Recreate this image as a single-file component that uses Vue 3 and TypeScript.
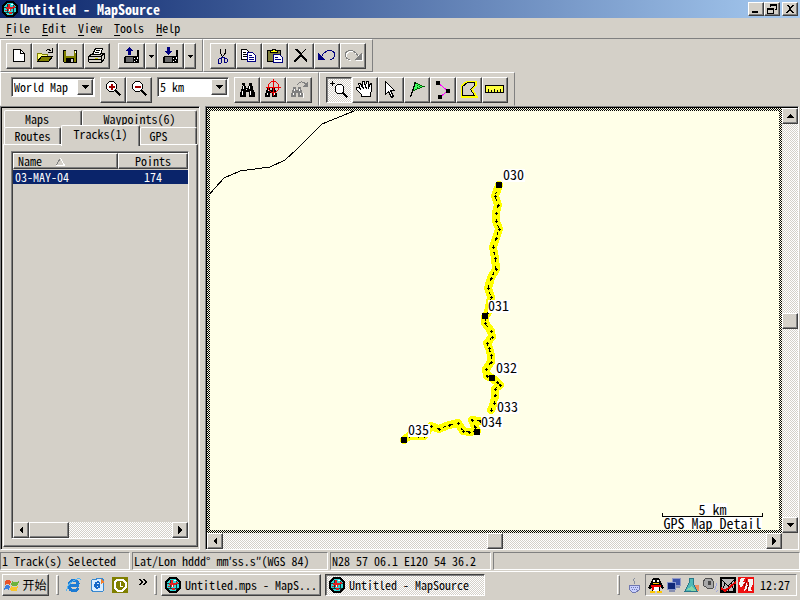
<script setup lang="ts">
import { h, ref, type FunctionalComponent } from 'vue'

// One painted layer of an icon: path, fill, stroke, stroke width
type Layer = [d: string, fill?: string, stroke?: string, width?: number]

const K = '#000'
const N = '#000080'
const G = '#808080'

const binoculars = 'M6 4h3v3h1v2h2v-2h1v-3h3v3h1v4h1v2h1v5h-6v-5h-3v5h-6v-5h1v-3h1v-3h1z'
const smallBinoculars = 'M5 8h3v3h2v-3h3v3h1v3h1v4h-5v-4h-2v4h-5v-4h1v-3h1z'

const icons: Record<string, Layer[]> = {
  fresh: [['M5.5 4.5h7l4 4v8h-11z', '#fff', K], ['M12.5 4.5v4h4', 'none', K]],
  open: [
    ['M3.5 16.5v-8h4l1 1h5v3', '#ffff80', '#808000'],
    ['M3.5 16.5l4-5h11l-4 5z', '#808000', K],
    ['M11.5 6.5c2-3 4-2 6 0M18 3v4h-4', 'none', K],
  ],
  save: [
    ['M3.5 5.5h13v12h-12l-1-1z', '#808000', K],
    ['M6 5h8v6h-8z', '#d4d0c8'],
    ['M6 13h8v5h-8z', K],
    ['M11 14h2v3h-2z', '#d4d0c8'],
    ['M15 6h1v2h-1z', '#fff'],
  ],
  print: [
    ['M2.5 11.5l4-3h12v5l-3 4h-12l-1-1z', '#d4d0c8', K],
    ['M6.500 9.500l3-6h7l-2 6z', '#fff', K],
    ['M10 5.500h4M9 7.500h4', 'none', K],
    ['M3 11.5h12l3-3M15.5 11.5v5M3 14.500h12', 'none', K],
    ['M9 13h3v1h-3z', '#c0c000'],
  ],
  upload: [
    ['M4 11h12v7h-13v-6z', K],
    ['M5 12h7v5h-7z', '#686868'],
    ['M16 5h2v13h-2z', K],
    ['M13 13h1v1h-1zM15 15h1v1h-1zM13 16h1v1h-1zM16 12h1v2h-1z', '#fff'],
    ['M8 2h1v1h1v1h1v1h1v1h-2v4h-3v-4h-2v-1h1v-1h1v-1h1z', N],
  ],
  download: [
    ['M4 11h12v7h-13v-6z', K],
    ['M5 12h7v5h-7z', '#686868'],
    ['M16 5h2v13h-2z', K],
    ['M13 13h1v1h-1zM15 15h1v1h-1zM13 16h1v1h-1zM16 12h1v2h-1z', '#fff'],
    ['M7 2h3v4h2v1h-1v1h-1v1h-1v1h-1v-1h-1v-1h-1v-1h-1v-1h2z', N],
  ],
  cut: [
    ['M8.5 4v4l2 4M13.5 4v4l-3 4', 'none', K],
    ['M10.5 12l-2 2M10.5 12l2 1', 'none', N],
    ['M6.5 14.5l1-1h2v4l-1 1h-2zM12.5 13.5h2l1 1v2l-1 1h-2z', 'none', N],
  ],
  copy: [
    ['M3.5 4.5h5l3 3v7h-8z', '#fff', K],
    ['M5 7.5h3M5 9.5h4M5 11.5h4', 'none', K],
    ['M9.5 7.5h5l3 3v6h-8z', '#fff', N],
    ['M11 10.5h3M11 12.5h5M11 14.5h5', 'none', N],
  ],
  paste: [
    ['M3.5 5.5h13v11h-13z', '#808040', K],
    ['M6.5 7.5v-2h2v-1h3v1h2v2z', '#ffff00', K],
    ['M9.5 9.5h6l3 3v5h-9z', '#fff', N],
    ['M11 12.5h3M11 14.5h6', 'none', N],
  ],
  remove: [['M4 4h3l4 4l4-4h1l-4 5l5 6v2h-1l-5-6l-5 6h-2v-1l6-7z', K]],
  undo: [
    ['M2 8l8 7h-8z', N],
    ['M6 11c2-5 7-6 10-5c4 2 4 7-2 9', 'none', N, 1],
  ],
  redo: [
    ['M21 9v7h-8z', '#fff'],
    ['M17 12c-2-5-7-6-10-5c-4 2-4 7 2 9', 'none', '#fff', 1],
    ['M20 8v7h-8z', G],
    ['M16 11c-2-5-7-6-10-5c-4 2-4 7 2 9', 'none', G, 1],
  ],
  zoomIn: [
    ['M7.5 2.5h4l3 3v4l-3 3h-4l-3-3v-4z', '#fff', K],
    ['M13.5 11.5l5 5', 'none', K, 2],
    ['M9 5h2v6h-2zM7 7h6v2h-6z', '#a00000'],
  ],
  zoomOut: [
    ['M7.5 2.5h4l3 3v4l-3 3h-4l-3-3v-4z', '#fff', K],
    ['M13.5 11.5l5 5', 'none', K, 2],
    ['M7 7h6v2h-6z', '#a00000'],
  ],
  find: [[binoculars, K], ['M7 7h1v3h-1zM6 12h1v4h-1zM13 7h1v3h-1zM14 12h1v4h-1zM10 10h1v1h-1z', '#fff']],
  findNear: [
    [smallBinoculars, K],
    ['M6 10h1v2h-1zM5 14h1v2h-1zM11 10h1v2h-1zM12 14h1v2h-1z', '#fff'],
    ['M9.5 2.500h4l3 3v5l-3 3h-4l-3-3v-5zM11.5 0v17M4 8.5h15', 'none', '#f00000'],
  ],
  findNext: [
    [smallBinoculars, G],
    ['M6 10h1v2h-1zM5 14h1v2h-1zM11 10h1v2h-1zM12 14h1v2h-1zM15 14h1v5h-1z', '#fff'],
    ['M9.5 6c2-4 6-4 8-1', 'none', G],
    ['M20 2v6h-6z', G],
  ],
  lens: [
    ['M9.5 5.5h4l2 2v5l-2 2h-4l-2-2v-5z', '#fff', K],
    ['M14.5 13.5l5 5', 'none', K, 2],
    ['M4.5 2v5M2 4.5h5', 'none', K],
  ],
  hand: [
    ['M7.5 17.5v-2l-5-5v-2h2l2 2l-2-6h2l2 4v-6h2l1 6l1-6h2v6l2-4h1v7l-1 3v3z', '#fff', K],
    ['M9.5 8v2M12.5 8v2M14.5 8v2', 'none', K],
  ],
  arrow: [['M5.5 2.5l9 9h-4l3 6l-2 1l-3-6l-3 3z', '#fff', K]],
  flag: [['M8.5 3.5l9 4l-10 4z', '#40ff60', '#006000'], ['M9.5 3l-5 15', 'none', K, 1], ['M11 6h1v1h-1zM13 7h1v1h-1zM11 8h1v1h-1z', '#006000']],
  route: [['M6 4l10 8l-8 6', 'none', '#ff00ff'], ['M4 2h4v4h-4zM14 10h4v4h-4zM6 16h4v4h-4z', K]],
  polygon: [['M4.5 7.5l5-4h7v3l-4 4l4 6h-12z', 'none', '#ffff00', 4], ['M4.5 7.5l5-4h7v3l-4 4l4 6h-12z', '#d4d0c8', K]],
  ruler: [
    ['M1.5 6.5h18v7h-18z', '#ffff40', K],
    ['M4.5 10v3M7.5 11v2M10.5 10v3M13.5 11v2M16.5 10v3', 'none', K],
  ],
  globe: [
    ['M5 1h6l4 4v6l-4 4h-6l-4-4v-6z', '#30d8d8', K, 2],
    ['M5 3v9M11 4v9M2 6.500h12M3 11.500h10', 'none', '#104040'],
    ['M6 3h2v3h3v2h-2v2h-3v-2h-2v-2h2zM11 5h2v2h-2zM7 11h3v2h-3zM3 9h2v1h-2z', '#e02020'],
    ['M9 3h2v1h-2zM7 8h1v2h-1z', '#fff'],
  ],
  windows: [
    ['M1 4q3-2 6 0l-1 4q-3-2-5 0z', '#e8532a'],
    ['M8 4q4 2 7 0l-1 4q-3 2-7 0z', '#6cb33e'],
    ['M1 9q3-2 5 0l-1 4q-3-2-5 0z', '#3c7fe0'],
    ['M7 9q4 2 7 0l-1 5q-4 1-7-1z', '#f7c52c'],
  ],
  ie: [
    ['M12.500 7q-1-3.500-4.500-3.500q-4.500 0-5 5q0 5 5 5q3 0 4.500-2.500M4 8.500h9', 'none', '#1c7bd4', 3],
    ['M1 14q-1-5 6-10q6-4 8-1', 'none', '#56b4f0', 1],
  ],
  mail: [
    ['M3 3l9-2l3 2l-1 11l-9 1l-3-2z', '#d8ecff', '#3888d0'],
    ['M11 6q-4-2-5 2q0 4 5 2M6 8h5', 'none', '#1668c8', 2],
    ['M12 2l4 3l-4 2z', '#f08030'],
  ],
  clock: [
    ['M0 0h16v16h-16z', '#808000'],
    ['M5.500 2.500h5l3 3v5l-3 3h-5l-3-3v-5z', 'none', '#fff', 2],
    ['M8 5v4h3', 'none', '#fff', 1],
  ],
  cup: [
    ['M2 8h11l-1 5l-3 2h-4l-3-3z', '#c8d0ff', '#7078b0'],
    ['M4 10h1v1h-1zM6 10h1v1h-1zM8 10h1v1h-1zM10 10h1v1h-1zM5 12h1v1h-1zM7 12h1v1h-1zM9 12h1v1h-1z', '#7078b0'],
    ['M7 7q2-2 0-3t1-3', 'none', '#8890a0'],
  ],
  penguin: [
    ['M5 1h6l2 4l3 6l-2 1l-2-2v4h-8v-4l-2 2l-2-1l3-6z', '#000'],
    ['M5 9h6v5h-6z', '#fff'],
    ['M3 8h10v2h-10zM4 10h2v3h-2z', '#f00000'],
    ['M5 6h6v1h-6zM2 14h5v2h-5zM9 14h5v2h-5z', '#ffc800'],
    ['M5 3h2v2h-2zM9 3h2v2h-2z', '#fff'],
  ],
  network: [
    ['M6.500 1.500h8v7h-8z', '#3850a8', '#9098c8'],
    ['M1.500 5.500h8v7h-8z', '#102878', '#8898d0'],
    ['M3 14h6M10 10h4', 'none', '#8890b0', 2],
  ],
  person: [
    ['M10 8h5v6h-4z', '#f09060'],
    ['M5 1h4v5l4 8h-12l4-8z', '#50b8b8', '#287888'],
    ['M2 13l6-4l4 5z', '#88d8a8'],
  ],
  speaker: [
    ['M3 2l6-1l3 4l-1 6l-4 1l-5-3l-1-4z', '#a8a8a8', '#505050'],
    ['M6 4h3v4h-3z', '#484848'],
    ['M12 13q3-2 2-7M14 15q4-3 2-7', 'none', '#a0a8e0'],
  ],
  shield: [
    ['M1 1h14v14h-14z', '#b8b8b8', K, 2],
    ['M2 3l6 6l6-6M8 9v6M5 6l-3 8M11 6l3 8', 'none', K],
    ['M1 11l4 3l11-9', 'none', '#e00000', 2],
  ],
  swap: [
    ['M0 0h16v16h-16z', '#f01010'],
    ['M3 1h4l-2 4h2l-4 6l-2-4zM10 2h5v5l-2 4l1 3h-4zM9 5l-3 9l4-3z', '#f4f4f4'],
    ['M9 2l-3 8M11 5l-2 9', 'none', '#900000'],
  ],
}

const Icon: FunctionalComponent<{ name: string; box?: number }> = (props) => {
  const box = props.box ?? 22
  return h(
    'svg',
    { width: box, height: box, viewBox: `0 0 ${box} ${box}`, 'shape-rendering': 'crispEdges', 'aria-hidden': 'true' },
    icons[props.name].map(([d, fill = 'none', stroke = 'none', width = 1]) =>
      h('path', { d, fill, stroke, 'stroke-width': width }),
    ),
  )
}
Icon.props = ['name', 'box']

const menus = ['File', 'Edit', 'View', 'Tools', 'Help']
const fileTools = [['fresh', 'New'], ['open', 'Open'], ['save', 'Save'], ['print', 'Print']]
const transferTools = [['upload', 'Send to device'], ['download', 'Receive from device']]
const editTools = [['cut', 'Cut'], ['copy', 'Copy'], ['paste', 'Paste'], ['remove', 'Delete'], ['undo', 'Undo'], ['redo', 'Redo']]
const zoomTools = [['zoomIn', 'Zoom in'], ['zoomOut', 'Zoom out']]
const findTools = [['find', 'Find'], ['findNear', 'Find nearest'], ['findNext', 'Find next']]
const mapTools = [
  ['lens', 'Zoom tool'], ['hand', 'Hand tool'], ['arrow', 'Selection tool'], ['flag', 'Waypoint tool'],
  ['route', 'Route tool'], ['polygon', 'Map tool'], ['ruler', 'Distance tool'],
]

const activeTool = ref('lens')
const product = ref('World Map')
const scale = ref('5 km')

const tabRows = [['Maps', 'Waypoints(6)'], ['Routes', 'Tracks(1)', 'GPS']]
const activeTab = ref('Tracks(1)')

const trackSouth = [
  [289, 74], [285, 85], [288, 94], [286, 102], [286, 110], [289, 118], [286, 127], [283, 136], [285, 147], [286, 158],
  [281, 167], [278, 177], [281, 186], [278, 201], [275, 206], [275, 212], [281, 220], [282, 226], [277, 232], [279, 237],
  [281, 244], [281, 251], [276, 258], [277, 265], [282, 267], [287, 271], [290, 274], [285, 278], [285, 284], [284, 292],
  [281, 299],
]
const trackWest = [
  [270, 310], [262, 309], [265, 316], [267, 320], [259, 321], [253, 320], [248, 312], [239, 314], [229, 318],
  [221, 315], [214, 325], [208, 325], [199, 325], [194, 329],
]
const tracks = [trackSouth, trackWest]
const points = (t: number[][]) => t.map((p) => p.join(',')).join(' ')
const crosses = tracks.flat().map(([x, y]) => `M${x - 1} ${y}h3v1h-3zM${x} ${y - 1}h1v3h-1z`).join('')

const waypoints = [
  { name: '030', x: 293, y: 69 },
  { name: '031', x: 278, y: 200 },
  { name: '032', x: 286, y: 262 },
  { name: '033', x: 287, y: 301 },
  { name: '034', x: 271, y: 316 },
  { name: '035', x: 198, y: 324 },
]
const markers = [[289, 74], [275, 205], [282, 267], [267, 321], [194, 329]]

const trayIcons = ['penguin', 'network', 'person', 'speaker', 'shield', 'swap']
</script>

<template>
  <div class="app">
    <header class="title">
      <Icon name="globe" :box="16" />
      <h1>Untitled - MapSource</h1>
      <div class="window-buttons">
        <button type="button" class="face" aria-label="Minimize"><svg width="12" height="10"><path d="M2 7h6v2H2z" /></svg></button>
        <button type="button" class="face" aria-label="Restore"><svg width="12" height="10"><path d="M4 0h7v6H9V5h1V2H5v1H4zM1 4h7v6H1zM2 6v3h5V6z" fill-rule="evenodd" /></svg></button>
        <button type="button" class="face close" aria-label="Close"><svg width="12" height="10"><path d="M2 1h2l2 2 2-2h2L7 4v1l3 4H8L6 6 4 9H2l3-4V4z" /></svg></button>
      </div>
    </header>

    <nav class="menu">
      <button v-for="m in menus" :key="m" type="button"><u>{{ m[0] }}</u>{{ m.slice(1) }}</button>
    </nav>

    <div class="bars">
      <div class="row">
        <div class="band opening">
          <div class="cluster">
            <button v-for="[name, label] in fileTools" :key="name" type="button" class="tool face" :aria-label="label"><Icon :name="name" /></button>
          </div>
          <div class="cluster">
            <template v-for="[name, label] in transferTools" :key="name">
              <button type="button" class="tool face wide" :aria-label="label"><Icon :name="name" /></button>
              <button type="button" class="face more" :aria-label="label + ' options'"><svg width="5" height="3"><path d="M0 0h5L2.500 3z" /></svg></button>
            </template>
          </div>
        </div>
        <div class="band">
          <div class="cluster">
            <button v-for="[name, label] in editTools" :key="name" type="button" class="tool face" :aria-label="label"><Icon :name="name" /></button>
          </div>
        </div>
      </div>
      <div class="row second">
        <div class="band finder">
          <div class="combo product">
            <select v-model="product" aria-label="Map product"><option>World Map</option></select>
            <span class="face drop"><svg width="8" height="4"><path d="M0 0h8L4 4z" /></svg></span>
          </div>
          <div class="cluster">
            <button v-for="[name, label] in zoomTools" :key="name" type="button" class="tool face" :aria-label="label"><Icon :name="name" /></button>
          </div>
          <div class="combo scale">
            <select v-model="scale" aria-label="Map scale"><option>5 km</option></select>
            <span class="face drop"><svg width="8" height="4"><path d="M0 0h8L4 4z" /></svg></span>
          </div>
          <div class="cluster">
            <button v-for="[name, label] in findTools" :key="name" type="button" class="tool face" :aria-label="label"><Icon :name="name" /></button>
          </div>
        </div>
        <div class="band">
          <div class="cluster">
            <button
              v-for="[name, label] in mapTools" :key="name" type="button" class="tool face"
              :class="{ pressed: activeTool === name }" :aria-label="label" @click="activeTool = name"
            ><Icon :name="name" /></button>
          </div>
        </div>
      </div>
    </div>

    <main class="content">
      <section class="side">
        <div v-for="(row, i) in tabRows" :key="i" class="tabs" :class="'tabs-' + i" role="tablist">
          <button
            v-for="t in row" :key="t" type="button" role="tab" class="tab" :class="{ active: t === activeTab }"
            :aria-selected="t === activeTab" @click="activeTab = t"
          >{{ t }}</button>
        </div>
        <div class="page">
          <div class="list">
            <table>
              <thead>
                <tr>
                  <th class="name">Name <svg width="9" height="8"><path d="M4.500 0L0 7.500" stroke="#808080" /><path d="M4.500 0l4 7.500H0" fill="none" stroke="#fff" /></svg></th>
                  <th class="count">Points</th>
                </tr>
              </thead>
              <tbody>
                <tr><td>03-MAY-04</td><td class="count">174</td></tr>
              </tbody>
            </table>
            <div class="scroll horizontal start">
              <button type="button" class="face end" aria-label="Scroll list left"><svg width="4" height="8"><path d="M4 0v8L0 4z" /></svg></button>
              <div class="track"><div class="face thumb long"></div></div>
              <button type="button" class="face end" aria-label="Scroll list right"><svg width="4" height="8"><path d="M0 0v8L4 4z" /></svg></button>
            </div>
          </div>
        </div>
      </section>

      <section class="pane">
        <div class="frame">
          <div class="map">
            <svg class="chart" role="img" aria-label="Track map">
              <polyline class="coast" points="-3,86 14,67 30,60 60,56 75,49 87,38 112,13 144,0" />
              <polyline v-for="(t, i) in tracks" :key="i" class="glow" :points="points(t)" />
              <polyline v-for="(t, i) in tracks" :key="'l' + i" class="line" :points="points(t)" />
              <path :d="crosses" />
              <g v-for="w in waypoints" :key="w.name">
                <rect class="plate" :x="w.x" :y="w.y - 11" width="22" height="13" />
                <text :x="w.x" :y="w.y">{{ w.name }}</text>
              </g>
              <rect v-for="([x, y], i) in markers" :key="'m' + i" :x="x - 3" :y="y - 3" width="6" height="6" />
            </svg>
            <div class="legend">
              <span class="distance">5 km</span>
              <span class="bracket"></span>
              <span class="detail">GPS Map Detail</span>
            </div>
          </div>
        </div>
        <div class="scroll vertical">
          <button type="button" class="face end" aria-label="Pan up"><svg width="8" height="4"><path d="M4 0l4 4H0z" /></svg></button>
          <div class="track"><div class="face thumb"></div></div>
          <button type="button" class="face end" aria-label="Pan down"><svg width="8" height="4"><path d="M0 0h8L4 4z" /></svg></button>
        </div>
        <div class="scroll horizontal">
          <button type="button" class="face end" aria-label="Pan left"><svg width="4" height="8"><path d="M4 0v8L0 4z" /></svg></button>
          <div class="track"><div class="face thumb"></div></div>
          <button type="button" class="face end" aria-label="Pan right"><svg width="4" height="8"><path d="M0 0v8L4 4z" /></svg></button>
        </div>
      </section>
    </main>

    <div class="status">
      <span>1 Track(s) Selected</span>
      <span>Lat/Lon hddd° mm′ss.s″(WGS 84)</span>
      <span>N28 57 06.1 E120 54 36.2</span>
      <span></span>
    </div>

    <footer class="taskbar">
      <button type="button" class="face begin"><Icon name="windows" :box="16" />开始</button>
      <i class="grip"></i>
      <div class="quick">
        <button type="button" aria-label="Internet Explorer"><Icon name="ie" :box="16" /></button>
        <button type="button" aria-label="Outlook Express"><Icon name="mail" :box="16" /></button>
        <button type="button" aria-label="Clock"><Icon name="clock" :box="16" /></button>
        <button type="button" class="chevrons" aria-label="More"><svg width="8" height="6"><path d="M0 0h2l2 3-2 3H0l2-3zM4 0h2l2 3-2 3H4l2-3z" /></svg></button>
      </div>
      <i class="grip tight"></i>
      <div class="tasks">
        <button type="button" class="face task"><Icon name="globe" :box="16" />Untitled.mps - MapS...</button>
        <button type="button" class="face task pressed"><Icon name="globe" :box="16" />Untitled - MapSource</button>
      </div>
      <i class="grip"></i>
      <Icon name="cup" :box="16" class="input-icon" />
      <div class="tray">
        <Icon v-for="t in trayIcons" :key="t" :name="t" :box="16" />
        <time>12:27</time>
      </div>
    </footer>
  </div>
</template>

<style>
body {
  background: #d4d0c8;
}
</style>

<style scoped>
.app {
  --face: #d4d0c8;
  --shade: #808080;
  --deep: #404040;
  --dither: repeating-conic-gradient(#fff 0 25%, #d4d0c8 0 50%) 0 0 / 2px 2px;
  display: flex;
  flex-direction: column;
  height: 100vh;
  min-height: 400px;
  background: var(--face);
  color: #000;
  font: 12px/16px "Noto Sans Mono CJK SC", "Liberation Mono", "Noto Sans CJK SC", monospace;
  overflow: hidden;
}
.app *, .app *::before {
  box-sizing: border-box;
}
button {
  margin: 0;
  padding: 0;
  border: 0;
  background: none;
  color: inherit;
  font: inherit;
  white-space: nowrap;
}
svg {
  display: block;
  flex: none;
  shape-rendering: crispEdges;
}
.face {
  display: flex;
  align-items: center;
  justify-content: center;
  background: var(--face);
  border: 1px solid;
  border-color: #fff var(--deep) var(--deep) #fff;
  box-shadow: inset -1px -1px var(--shade);
}
.face.pressed {
  background: var(--dither);
  border-color: var(--deep) #fff #fff var(--deep);
  box-shadow: inset 1px 1px var(--shade);
}

.title {
  display: flex;
  flex: none;
  align-items: center;
  gap: 2px;
  height: 18px;
  padding: 0 2px;
  background: linear-gradient(90deg, #0a246a, #a6caf0);
  color: #fff;
}
h1 {
  flex: 1;
  margin: 0;
  font-size: 14px;
  line-height: 18px;
  font-weight: 700;
}
.window-buttons {
  display: flex;
}
.window-buttons button {
  width: 16px;
  height: 14px;
}
.window-buttons .close {
  margin-left: 2px;
}

.menu {
  display: flex;
  flex: none;
  gap: 12px;
  height: 21px;
  padding: 0 6px;
  border-bottom: 1px solid var(--shade);
}
u {
  text-underline-offset: 2px;
}

.bars {
  flex: none;
}
.row {
  display: flex;
}
.band {
  display: flex;
  gap: 8px;
  height: 33px;
  padding: 3px 6px 0;
  border: 1px solid;
  border-color: #fff var(--shade) var(--shade) #fff;
}
.band.opening {
  padding-left: 5px;
}
.second .band {
  height: 34px;
  padding-top: 4px;
  border-bottom-color: transparent;
}
.cluster {
  display: flex;
}
.tool {
  width: 26px;
  height: 26px;
}
.tool.wide {
  width: 27px;
}
.more {
  width: 12px;
  height: 26px;
}
.band.finder {
  gap: 5px;
  padding-left: 10px;
}
.combo {
  display: flex;
  height: 20px;
  border: 1px solid;
  border-color: var(--shade) #fff #fff var(--shade);
  background: #fff;
  box-shadow: inset 1px 1px var(--deep);
}
.combo.product {
  width: 84px;
}
.combo.scale {
  width: 72px;
}
select {
  flex: 1;
  min-width: 0;
  padding: 0 0 0 2px;
  border: 0;
  appearance: none;
  background: none;
  color: inherit;
  font: inherit;
}
.drop {
  width: 16px;
  margin: 1px;
  pointer-events: none;
}

.content {
  display: grid;
  flex: 1;
  grid-template-columns: 200px minmax(0, 1fr);
  gap: 5px;
  min-height: 0;
  padding-right: 1px;
}
.side {
  display: flex;
  flex-direction: column;
  padding: 3px 1px 2px 2px;
  border: 1px solid;
  border-color: var(--shade) #fff #fff var(--shade);
  box-shadow: inset 1px 1px #000;
}
.tabs {
  display: grid;
  flex: none;
  height: 17px;
  padding: 0 1px;
}
.tabs-0 {
  grid-template-columns: 78fr 115fr;
}
.tabs-1 {
  grid-template-columns: 57fr 79fr 57fr;
}
.tab {
  padding-right: 12px;
  background: var(--face);
  border: 1px solid;
  border-color: #fff var(--deep) transparent #fff;
  border-radius: 2px 2px 0 0;
  box-shadow: inset -1px 0 var(--shade);
}
.tabs-0 .tab:last-child {
  padding-right: 0;
}
.tabs-1 .tab {
  padding-right: 20px;
}
.tabs-1 .tab:first-child {
  padding-right: 0;
}
.tabs-1 .tab.active {
  z-index: 1;
  margin: -2px 0 -1px;
  padding: 0 0 4px;
  border-bottom: 0;
}
.page {
  display: flex;
  flex: 1;
  min-height: 0;
  padding: 6px 8px 7px 7px;
  border: 1px solid;
  border-color: #fff var(--deep) var(--deep) #fff;
  box-shadow: inset -1px -1px var(--shade);
}
.list {
  display: flex;
  flex: 1;
  flex-direction: column;
  justify-content: space-between;
  border: 1px solid;
  border-color: var(--shade) #fff #fff var(--shade);
  box-shadow: inset 1px 1px var(--deep);
  padding: 1px 0 0 1px;
}
table {
  width: 100%;
  border-collapse: separate;
  border-spacing: 0;
  table-layout: fixed;
}
th {
  height: 16px;
  padding: 0 4px;
  border: 1px solid;
  border-color: #fff var(--deep) var(--deep) #fff;
  box-shadow: inset -1px -1px var(--shade);
  font-weight: 400;
  line-height: 14px;
  text-align: left;
}
th.name {
  width: 60%;
}
th svg {
  display: inline-block;
  margin-left: 8px;
}
th.count, td.count {
  text-align: center;
}
td {
  height: 14px;
  padding: 0 2px;
  background: #0a246a;
  color: #fff;
  line-height: 14px;
}
tbody::before {
  content: "";
  display: block;
  height: 1px;
}

.scroll {
  display: flex;
  flex: none;
}
.vertical {
  flex-direction: column;
}
.end {
  flex: none;
  width: 16px;
  height: 16px;
}
.track {
  display: flex;
  flex: 1;
  align-items: center;
  justify-content: center;
  background: var(--dither);
}
.vertical .track {
  flex-direction: column;
}
.start .track {
  justify-content: flex-start;
}
.thumb {
  width: 16px;
  height: 16px;
}
.thumb.long {
  width: 40px;
}

.pane {
  display: grid;
  grid-template: minmax(0, 1fr) 16px / minmax(0, 1fr) 16px;
  padding: 1px 0 0 1px;
  border: 1px solid;
  border-color: var(--shade) #fff #fff var(--shade);
  box-shadow: inset 1px 1px #000;
}
.frame {
  padding: 3px;
  background: repeating-conic-gradient(#000 0 25%, #ffffe8 0 50%) 0 0 / 2px 2px;
}
.map {
  position: relative;
  height: 100%;
  background: #ffffe8;
}
.chart {
  width: 100%;
  height: 100%;
}
.chart text {
  font-size: 14px;
}
.coast, .line {
  fill: none;
  stroke: #000;
}
.line {
  stroke-dasharray: 3 4;
}
.glow {
  fill: none;
  stroke: #ff0;
  stroke-width: 8;
  stroke-linecap: round;
  stroke-linejoin: round;
}
.plate {
  fill: #fff;
}
.legend {
  position: absolute;
  right: 16px;
  bottom: 1px;
  display: flex;
  flex-direction: column;
  align-items: center;
  font-size: 14px;
  line-height: 12px;
}
.legend .distance, .legend .detail {
  background: #fff;
}
.bracket {
  width: 101px;
  height: 4px;
  border: 1px solid #000;
  border-top: 0;
}
.legend .distance {
  margin-bottom: -2px;
}

.status {
  display: grid;
  flex: none;
  grid-template-columns: 130px 196px 161px 1fr;
  gap: 2px;
  height: 21px;
  padding: 2px 0 1px;
}
.status span {
  padding-left: 1px;
  border: 1px solid;
  border-color: var(--shade) #fff #fff var(--shade);
  line-height: 16px;
  white-space: nowrap;
  overflow: hidden;
}

.taskbar {
  display: flex;
  flex: none;
  align-items: center;
  height: 29px;
  padding: 0 3px 2px 2px;
  border-top: 1px solid #fff;
}
.begin {
  gap: 2px;
  width: 47px;
  height: 22px;
}
.grip {
  width: 3px;
  height: 20px;
  margin: 0 7px;
  border: 1px solid;
  border-color: #fff var(--shade) var(--shade) #fff;
}
.grip.tight {
  margin-right: 4px;
}
.quick {
  display: flex;
  gap: 7px;
}
.quick .chevrons {
  align-self: flex-start;
  margin: 2px 0 0 4px;
}
.tasks {
  display: flex;
  flex: 1;
  gap: 4px;
  min-width: 0;
}
.task {
  flex: 0 1 160px;
  justify-content: flex-start;
  gap: 4px;
  height: 22px;
  padding-left: 3px;
}
.input-icon {
  margin-right: 2px;
}
.tray {
  display: flex;
  align-items: center;
  gap: 2px;
  height: 22px;
  padding: 0 6px 0 2px;
  border: 1px solid;
  border-color: var(--shade) #fff #fff var(--shade);
}
time {
  margin-left: 4px;
}
</style>
